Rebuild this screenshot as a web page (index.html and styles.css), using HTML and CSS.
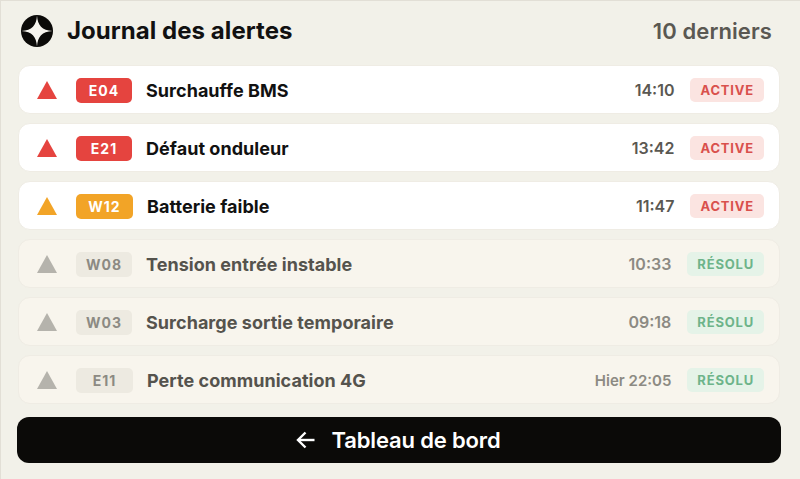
FILE: index.html
```html
<!DOCTYPE html>
<html lang="fr">

<head>
    <meta charset="UTF-8">
    <meta name="viewport" content="width=device-width, initial-scale=1.0">
    <title>Journal des alertes</title>
    <link rel="stylesheet" href="styles.css">
</head>

<body>
    <div class="screen">
        <header class="top">
            <div class="top-left">
                <svg class="logo" width="32" height="32" viewBox="0 0 32 32">
                    <circle cx="16" cy="16" r="16" fill="#0b0a08" />
                    <path d="M16 0.5C16.6 10.5 21 15.2 31.5 16C21 16.8 16.6 21.5 16 31.5C15.4 21.5 11 16.8 0.5 16C11 15.2 15.4 10.5 16 0.5Z" fill="#f6f4ee" />
                </svg>
                <h1>Journal des alertes</h1>
            </div>
            <span class="count">10 derniers</span>
        </header>

        <ul class="alerts">
            <li class="alert">
                <svg class="tri" width="20" height="18" viewBox="0 0 20 18"><path d="M10 0L20 18H0Z" fill="#e5443f" /></svg>
                <span class="code code-red">E04</span>
                <span class="label">Surchauffe BMS</span>
                <span class="time">14:10</span>
                <span class="state state-active">ACTIVE</span>
            </li>
            <li class="alert">
                <svg class="tri" width="20" height="18" viewBox="0 0 20 18"><path d="M10 0L20 18H0Z" fill="#e5443f" /></svg>
                <span class="code code-red">E21</span>
                <span class="label">Défaut onduleur</span>
                <span class="time">13:42</span>
                <span class="state state-active">ACTIVE</span>
            </li>
            <li class="alert">
                <svg class="tri" width="20" height="18" viewBox="0 0 20 18"><path d="M10 0L20 18H0Z" fill="#f2a427" /></svg>
                <span class="code code-orange code-wide">W12</span>
                <span class="label">Batterie faible</span>
                <span class="time">11:47</span>
                <span class="state state-active">ACTIVE</span>
            </li>
            <li class="alert done">
                <svg class="tri" width="20" height="18" viewBox="0 0 20 18"><path d="M10 0L20 18H0Z" fill="#b5b3ac" /></svg>
                <span class="code code-grey">W08</span>
                <span class="label">Tension entrée instable</span>
                <span class="time">10:33</span>
                <span class="state state-done">RÉSOLU</span>
            </li>
            <li class="alert done">
                <svg class="tri" width="20" height="18" viewBox="0 0 20 18"><path d="M10 0L20 18H0Z" fill="#b5b3ac" /></svg>
                <span class="code code-grey">W03</span>
                <span class="label">Surcharge sortie temporaire</span>
                <span class="time">09:18</span>
                <span class="state state-done">RÉSOLU</span>
            </li>
            <li class="alert done">
                <svg class="tri" width="20" height="18" viewBox="0 0 20 18"><path d="M10 0L20 18H0Z" fill="#b5b3ac" /></svg>
                <span class="code code-grey code-wide">E11</span>
                <span class="label">Perte communication 4G</span>
                <span class="time time-long">Hier 22:05</span>
                <span class="state state-done">RÉSOLU</span>
            </li>
        </ul>

        <button class="back">
            <svg width="20" height="18" viewBox="0 0 20 18" fill="none" stroke="#fff" stroke-width="2.4">
                <path d="M18.5 9H2" />
                <path d="M9.5 1.5L2 9L9.5 16.5" />
            </svg>
            Tableau de bord
        </button>
    </div>
</body>

</html>
```

FILE: styles.css
```css
html,
body {
    margin: 0;
    padding: 0;
}

body {
    font-family: Inter, "Liberation Sans", sans-serif;
    background-color: #f2f1e9;
}

.screen {
    box-sizing: border-box;
    width: 800px;
    height: 479px;
    border: 1px solid #e2dfd6;
    border-bottom: none;
    border-right: none;
    padding: 0 19px 0 16px;
    display: flex;
    flex-direction: column;
}

.top {
    box-sizing: border-box;
    height: 64px;
    display: flex;
    align-items: center;
    justify-content: space-between;
    padding: 0 9px 5px 4px;
    flex-shrink: 0;
}

.top-left {
    display: flex;
    align-items: center;
    gap: 14px;
}

h1 {
    margin: 0;
    font-size: 24px;
    font-weight: 700;
    letter-spacing: 0.05px;
    color: #111;
}

.count {
    font-size: 22px;
    font-weight: 600;
    letter-spacing: 0.1px;
    color: #5a5852;
}

.alerts {
    list-style: none;
    margin: 0;
    padding: 0 1px;
    display: flex;
    flex-direction: column;
    gap: 9px;
}

.alert {
    box-sizing: border-box;
    height: 49px;
    display: flex;
    align-items: center;
    padding: 1px 15px 0 18px;
    background-color: #fff;
    border: 1px solid #efece4;
    border-radius: 12px;
}

.alert.done {
    background-color: #f8f5ed;
}

.tri {
    flex-shrink: 0;
    margin-right: 19px;
}

.code {
    box-sizing: border-box;
    width: 56px;
    height: 25px;
    line-height: 25px;
    text-align: center;
    font-size: 14px;
    font-weight: 700;
    letter-spacing: 1px;
    border-radius: 5px;
    margin-right: 14px;
    color: #fff;
}

.code-wide {
    width: 57px;
}

.code-red {
    background-color: #e5443f;
}

.code-orange {
    background-color: #f2a427;
}

.code-grey {
    background-color: #edeae1;
    color: #8c8a83;
}

.label {
    flex: 1;
    font-size: 18px;
    font-weight: 700;
    letter-spacing: 0.04px;
    color: #111;
}

.done .label {
    color: #55534d;
}

.time {
    font-size: 16px;
    font-weight: 600;
    color: #5a5852;
    margin-right: 16px;
}

.done .time {
    color: #8c8a83;
}

.time-long {
    font-size: 15px;
}

.state {
    box-sizing: border-box;
    height: 24px;
    line-height: 24px;
    padding: 0 10px;
    font-size: 13px;
    font-weight: 700;
    letter-spacing: 0.8px;
    border-radius: 5px;
}

.state-active {
    background-color: #fbe4e1;
    color: #d9504c;
}

.state-done {
    background-color: #e5f3e8;
    color: #6db48a;
}

.back {
    flex-shrink: 0;
    height: 46px;
    margin-top: 13px;
    padding: 0 1px 0 0;
    border: none;
    border-radius: 12px;
    background-color: #0b0a08;
    color: #fff;
    font-family: inherit;
    font-size: 22px;
    font-weight: 600;
    letter-spacing: -0.15px;
    display: flex;
    align-items: center;
    justify-content: center;
    gap: 15px;
    cursor: pointer;
}
```
